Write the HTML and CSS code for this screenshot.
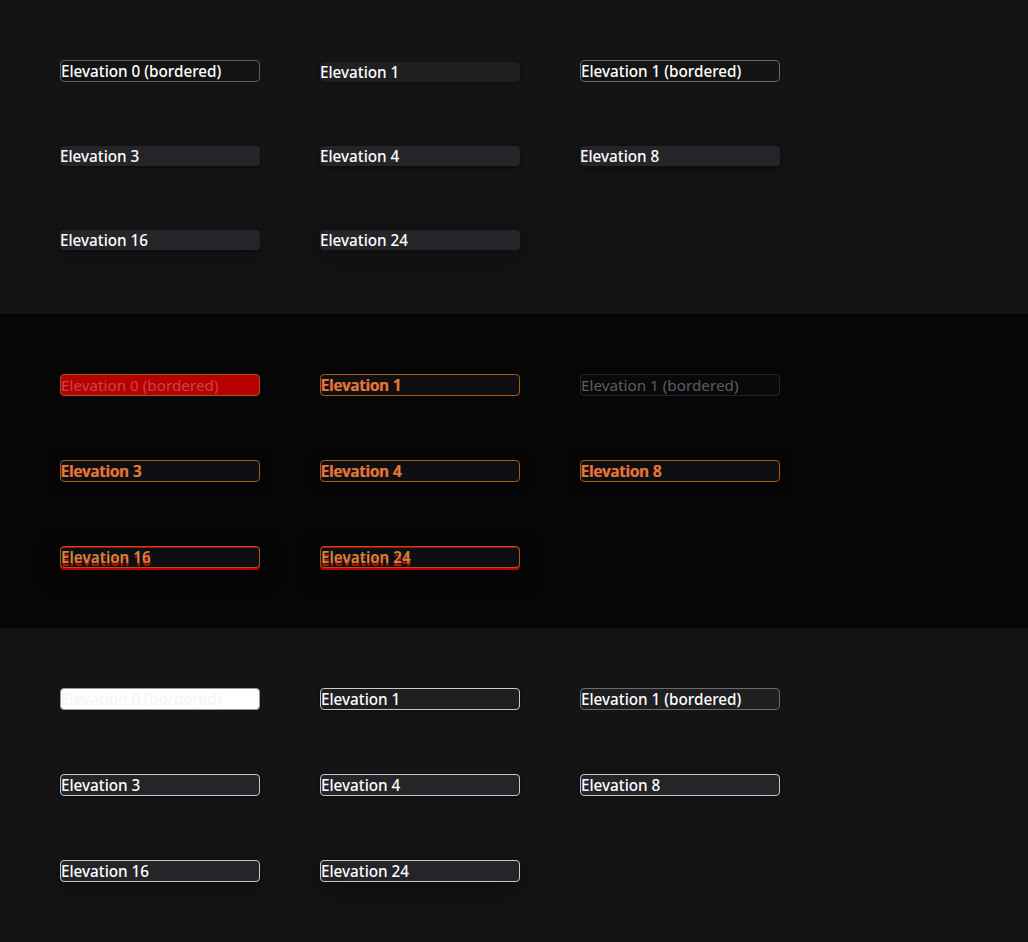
FILE: index.html
```html
<!DOCTYPE html>
<html lang="en">
<head>
<meta charset="utf-8">
<title>Elevation</title>
<link rel="stylesheet" href="styles.css">
</head>
<body>
<div class="page">
  <section class="section normal">
    <div class="grid">
      <div class="card bordered e0">Elevation 0 (bordered)</div>
      <div class="card e1">Elevation 1</div>
      <div class="card bordered e1b">Elevation 1 (bordered)</div>
      <div class="card e3">Elevation 3</div>
      <div class="card e4">Elevation 4</div>
      <div class="card e8">Elevation 8</div>
      <div class="card e16">Elevation 16</div>
      <div class="card e24">Elevation 24</div>
    </div>
  </section>
  <section class="section contrast">
    <div class="grid">
      <div class="card bordered e0">Elevation 0 (bordered)</div>
      <div class="card bordered e1">Elevation 1</div>
      <div class="card bordered e1b">Elevation 1 (bordered)</div>
      <div class="card bordered e3">Elevation 3</div>
      <div class="card bordered e4">Elevation 4</div>
      <div class="card bordered e8">Elevation 8</div>
      <div class="card bordered e16">Elevation 16</div>
      <div class="card bordered e24">Elevation 24</div>
    </div>
  </section>
  <section class="section outlined">
    <div class="grid">
      <div class="card bordered e0">Elevation 0 (bordered)</div>
      <div class="card bordered e1">Elevation 1</div>
      <div class="card bordered e1b">Elevation 1 (bordered)</div>
      <div class="card bordered e3">Elevation 3</div>
      <div class="card bordered e4">Elevation 4</div>
      <div class="card bordered e8">Elevation 8</div>
      <div class="card bordered e16">Elevation 16</div>
      <div class="card bordered e24">Elevation 24</div>
    </div>
  </section>
</div>
</body>
</html>
```

FILE: styles.css
```css
html, body {
  margin: 0;
  padding: 0;
  background: #141414;
}

.page {
  display: flex;
  flex-direction: column;
  height: 942px;
}

.section {
  flex: 1 1 0;
  padding: 60px;
  box-sizing: border-box;
  font-family: "Noto Sans", "Open Sans", sans-serif;
  font-size: 15.25px;
  font-weight: 500;
  line-height: 20px;
}

.grid {
  display: grid;
  grid-template-columns: repeat(3, 200px);
  column-gap: 60px;
  row-gap: 64px;
  align-items: end;
}

.card {
  box-sizing: border-box;
  width: 200px;
  height: 20px;
  border-radius: 4px;
  white-space: nowrap;
  overflow: visible;
}

.card.bordered {
  height: 22px;
  border: 1px solid transparent;
}

/* ---------- Section 1: normal dark ---------- */
.normal { background: #141414; color: #ffffff; }
.normal .card { background: #252529; }
.normal .e0 { background: #141414; border-color: #5e5e5e; }
.normal .e1 { background: #202023; box-shadow: 0 0 2px rgba(0,0,0,0.24), 0 1px 2px rgba(0,0,0,0.28); }
.normal .e1b { background: #141414; border-color: #6b6b6b; box-shadow: 0 0 2px rgba(0,0,0,0.24), 0 1px 2px rgba(0,0,0,0.28); }
.normal .e3 { box-shadow: 0 0 2px rgba(0,0,0,0.24), 0 2px 3px rgba(0,0,0,0.28); }
.normal .e4 { box-shadow: 0 0 2px rgba(0,0,0,0.24), 0 2px 4px rgba(0,0,0,0.28); }
.normal .e8 { box-shadow: 0 0 2px rgba(0,0,0,0.24), 0 4px 8px rgba(0,0,0,0.28); }
.normal .e16 { box-shadow: 0 0 2px rgba(0,0,0,0.24), 0 8px 16px rgba(0,0,0,0.28); }
.normal .e24 { box-shadow: 0 0 8px rgba(0,0,0,0.24), 0 14px 28px rgba(0,0,0,0.28); }

/* ---------- Section 2: high contrast overlay ---------- */
.contrast { background: #060606; }
.contrast .card {
  background: #0e0f12;
  border-color: #a85a10;
  color: #d0823c;
  font-weight: 600;
  text-shadow: -1px 0 0 #e0261c;
}
.contrast .e0 {
  background: #b80000;
  border-color: #9c5a14;
  color: #c24848;
  font-weight: 400;
  text-shadow: none;
}
.contrast .e1b {
  background: #09090a;
  border-color: #26262a;
  color: #5c5d62;
  font-weight: 400;
  text-shadow: none;
}
.contrast .e3, .contrast .e4, .contrast .e8 {
  box-shadow: 0 2px 10px rgba(0,0,0,0.6);
}
.contrast .e16, .contrast .e24 {
  box-shadow: inset 0 1px 0 #c40000, 0 2px 0 #c40000, 0 6px 20px rgba(0,0,0,0.6);
  color: #c88a3c;
  text-shadow: 0 3px 0 #c01010;
}

/* ---------- Section 3: outlined ---------- */
.outlined { background: #141414; color: #ffffff; }
.outlined .card {
  background: #252529;
  border-color: #c8c8c8;
}
.outlined .e0 { background: #ffffff; border-color: #9a9a9a; color: #f4f4fa; }
.outlined .e1 { background: #1f1f22; box-shadow: 0 0 2px rgba(0,0,0,0.24), 0 1px 2px rgba(0,0,0,0.28); }
.outlined .e1b { background: #1f1f22; border-color: #6a6a6a; }
.outlined .e3 { box-shadow: 0 0 2px rgba(0,0,0,0.24), 0 2px 3px rgba(0,0,0,0.28); }
.outlined .e4 { box-shadow: 0 0 2px rgba(0,0,0,0.24), 0 2px 4px rgba(0,0,0,0.28); }
.outlined .e8 { box-shadow: 0 0 2px rgba(0,0,0,0.24), 0 4px 8px rgba(0,0,0,0.28); }
.outlined .e16 { box-shadow: 0 0 2px rgba(0,0,0,0.24), 0 8px 16px rgba(0,0,0,0.28); }
.outlined .e24 { box-shadow: 0 0 8px rgba(0,0,0,0.24), 0 14px 28px rgba(0,0,0,0.28); }
```
